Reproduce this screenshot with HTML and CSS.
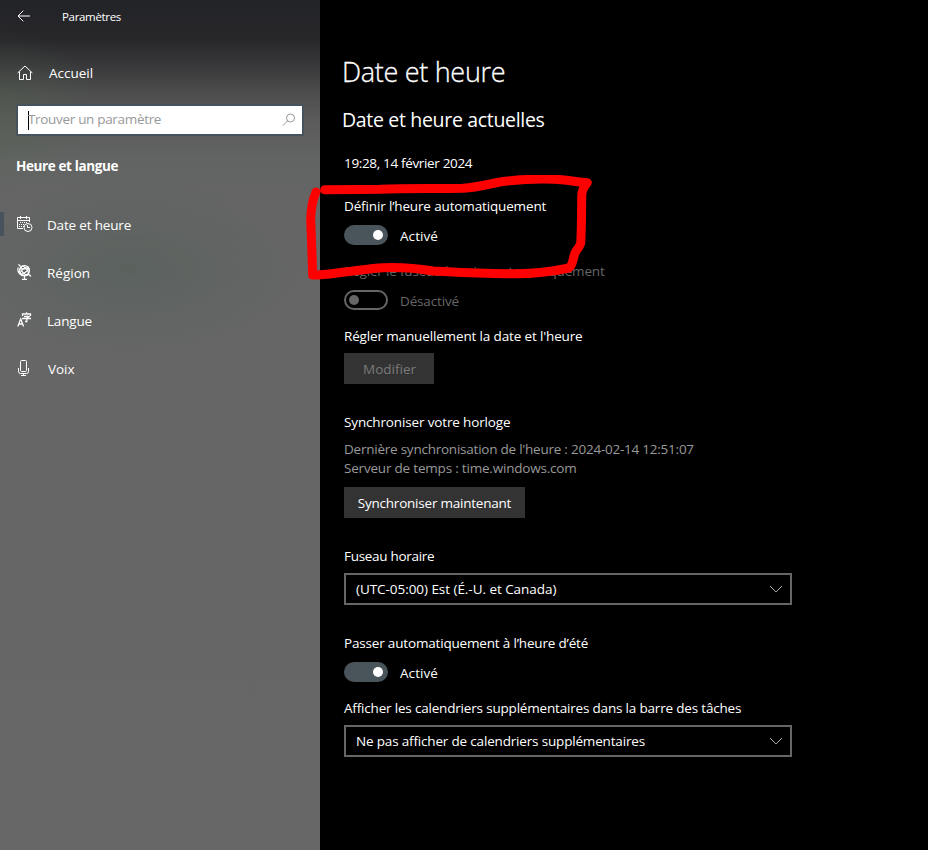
FILE: index.html
```html
<!DOCTYPE html>
<html lang="fr">
<head>
<meta charset="utf-8">
<title>Paramètres</title>
<link rel="stylesheet" href="styles.css">
</head>
<body>
<div class="window">
  <aside class="sidebar">
    <header class="titlebar">
      <svg class="back" width="14" height="12" viewBox="0 0 14 12"><path d="M1 6H13M6.3 .7L1 6l5.3 5.3"/></svg>
      <span class="app">Paramètres</span>
    </header>
    <div class="home">
      <svg class="icon" width="16" height="16" viewBox="0 0 16 16"><path d="M.6 8L8 1l7.400 7M2.500 6.500V14.500H6.500V9.500H9.500V14.500H13.500V6.500"/></svg>
      <span>Accueil</span>
    </div>
    <div class="search">
      <span class="caret"></span>
      <span class="placeholder">Trouver un paramètre</span>
      <svg class="lens" width="14" height="14" viewBox="0 0 14 14"><circle cx="8.500" cy="5" r="4"/><path d="M5.600 7.900L.8 12.700"/></svg>
    </div>
    <h3 class="group">Heure et langue</h3>
    <nav class="nav">
      <a class="item active">
        <svg class="icon calendar" width="16" height="16" viewBox="0 0 16 16"><path d="M6 12.500H.5V1.500H12.500V6M.5 4.500H12.500M3.500 0V3M9.500 0V3"/><path class="dots" d="M3 6.500H11M2 8.500H8M2 10.500H7"/><circle cx="11" cy="11.500" r="4"/><path d="M10.500 9V11.500H13"/></svg>
        <span>Date et heure</span></a>
      <a class="item">
        <svg class="icon globe" width="16" height="16" viewBox="0 0 16 16"><circle cx="7.500" cy="6.500" r="5"/><ellipse cx="7.500" cy="6.500" rx="2.500" ry="5" transform="rotate(-40 7.500 6.500)"/><ellipse cx="7.500" cy="6.500" rx="5" ry="2" transform="rotate(-40 7.500 6.500)"/><path d="M1.500 .3L3.500 2.500M1.200 3.500C-.5 10 6 14 12 10.500L14 12.500M7.500 12.500V15M5 15.300H10M3.500 4C6 5 10 5 11.800 4"/></svg>
        <span class="region">Région</span></a>
      <a class="item">
        <svg class="icon lang" width="16" height="16" viewBox="0 0 16 16"><path d="M.8 14.500L3.700 7L6.600 14.500M1.700 12H5.700M5.500 4V2H13.500V4M9.500 .3V2M7 4.500H12L9.800 6.200V9.500H8M5 6.500H14"/></svg>
        <span>Langue</span></a>
      <a class="item">
        <svg class="icon" width="16" height="16" viewBox="0 0 16 16"><path d="M3.500 1.500Q3.500 .5 4.500 .5H8.500Q9.500 .5 9.500 1.500V10.500Q9.500 11.500 8.500 11.500H4.500Q3.500 11.500 3.500 10.500ZM1.500 8V11.500Q1.500 13.500 3.500 13.500H9.500Q11.500 13.500 11.500 11.500V8M6.500 13.500V15.500M4 15.500H9"/></svg>
        <span class="voix">Voix</span></a>
    </nav>
  </aside>
  <main class="content">
    <h1 class="title">Date et heure</h1>
    <h2 class="subtitle">Date et heure actuelles</h2>
    <p class="line now">19:28, 14 février 2024</p>

    <p class="line wide">Définir l’heure automatiquement</p>
    <div class="switch-row"><span class="switch on"></span><span class="state">Activé</span></div>
    <p class="line dim">Régler le fuseau horaire automatiquement</p>
    <div class="switch-row dim"><span class="switch"></span><span class="state off">Désactivé</span></div>

    <p class="line wide">Régler manuellement la date et l'heure</p>
    <button class="button modify" disabled><span>Modifier</span></button>

    <p class="line wide">Synchroniser votre horloge</p>
    <div class="details">
      <p class="last-sync">Dernière synchronisation de l'heure : 2024-02-14 12:51:07</p>
      <p class="server">Serveur de temps : time.windows.com</p>
    </div>
    <button class="button sync"><span>Synchroniser maintenant</span></button>

    <p class="line tight">Fuseau horaire</p>
    <div class="select zone"><span>(UTC-05:00) Est (É.-U. et Canada)</span><svg class="chevron" width="14" height="8" viewBox="0 0 14 8"><path d="M1 1l6 6 6-6"/></svg></div>

    <p class="line">Passer automatiquement à l’heure d’été</p>
    <div class="switch-row"><span class="switch on"></span><span class="state">Activé</span></div>
    <p class="line calendars">Afficher les calendriers supplémentaires dans la barre des tâches</p>
    <div class="select"><span>Ne pas afficher de calendriers supplémentaires</span><svg class="chevron" width="14" height="8" viewBox="0 0 14 8"><path d="M1 1l6 6 6-6"/></svg></div>
  </main>
  <svg class="marker" width="300" height="110" viewBox="300 175 300 110"><path d="M324.700 189.700C350 189.500 360 189.500 380 189.300C410 188 435 189 463 188.300C480 187 488 184 500 182C530 178 555 179 566.700 180.300Q578 182 587.300 182.700C582 189 581.500 193 581.700 199C581.500 215 581.500 232 580.700 243.300C579 249 577 248 575 253C573 258 573 265 569 268C555 271 535 274 513 273.700C480 274 460 272.500 433 271C415 268 400 267 383 267.700C368 268.500 360 270.500 346.700 271.700C335 273 325 275 312.700 275C312 255 311.500 240 310.700 220Q311 203 316 192"/></svg>
</div>
</body>
</html>
```
FILE: styles.css
```css
* { box-sizing: border-box; }
body { margin: 0; background: #000; color: #fff; font: 13.5px/20px "Open Sans", "Noto Sans", sans-serif; letter-spacing: -.175px; }
h1, h2, h3, p { margin: 0; font-weight: 400; }
.window { position: relative; display: flex; width: 928px; height: 850px; overflow: hidden; }
svg { fill: none; stroke: currentColor; flex: none; }
span, p, h1, h2, h3 { white-space: nowrap; }

.sidebar {
  width: 320px; height: 850px; flex: none;
  background:
    radial-gradient(ellipse 100px 80px at 0 110px, rgba(82, 98, 78, .38), transparent),
    radial-gradient(ellipse 180px 90px at 130px 270px, rgba(84, 96, 90, .6), transparent),
    linear-gradient(#222327 0, #28282b 40px, #38383a 65px, #4b4b4c 90px, #5a5b5a 120px, #626463 160px, #656565 210px, #666 300px, #676767 100%);
}
.titlebar { display: flex; align-items: center; height: 32px; padding-left: 17px; }
.app { margin: 2px 0 0 31px; font-size: 11.5px; letter-spacing: -.325px; }
.home { display: flex; align-items: center; height: 20px; margin-top: 31px; padding-left: 17px; }
.home span { margin-left: 16px; letter-spacing: 0; }
.search { display: flex; align-items: center; width: 288px; height: 32px; margin: 21px 0 0 16px; padding: 0 6px 0 10px; border: 2px solid #46535c; background: #fff; color: #999; }
.caret { width: 1px; height: 19px; margin-right: -1px; background: #000; }
.placeholder { flex: 1; margin-top: -2px; letter-spacing: -.32px; }
.group { margin: 20px 0 0 16px; font-size: 13.5px; font-weight: 700; letter-spacing: -.38px; }
.nav { margin-top: 25px; }
.item { display: flex; align-items: center; height: 48px; padding-left: 17px; position: relative; }
.item .icon { margin-top: -2px; }
.item span { margin-left: 14px; }
.item .region { letter-spacing: 0; }
.item .voix { margin-left: 15px; letter-spacing: -.04px; }
.active::before { content: ""; position: absolute; left: 0; top: 11px; width: 4px; height: 24px; background: #46535c; }
.dots { stroke-dasharray: 1 1; }
.lang { stroke-width: 1.300px; }
.globe { stroke-width: 1.200px; }

.content { padding: 52px 0 0 24px; }
.title { margin-left: -2px; font-size: 27px; line-height: 40px; font-weight: 300; letter-spacing: -.3px; -webkit-text-stroke: .3px #fff; }
.subtitle { margin: 13px 0 18px -2px; font-size: 19.500px; line-height: 30px; letter-spacing: -.32px; }
.now { margin-bottom: 23px; letter-spacing: -.34px; }
.wide { letter-spacing: -.145px; }
.tight { letter-spacing: -.3px; }
.calendars { letter-spacing: -.185px; }
.switch-row { display: flex; height: 20px; margin: 9px 0 16px; }
.state { margin: 1px 0 0 12px; letter-spacing: .076px; }
.off { letter-spacing: -.148px; }
.switch { display: flex; align-items: center; width: 44px; height: 20px; padding: 0 3px; border: 2px solid currentColor; border-radius: 10px; }
.switch::before { content: ""; width: 10px; height: 10px; border-radius: 50%; background: currentColor; }
.switch.on { justify-content: flex-end; border-color: #4a545b; background: #4a545b; }
.dim { color: #666; }
.button { display: flex; align-items: center; justify-content: center; height: 31px; padding: 0; border: 0; background: #333; color: #fff; font: inherit; }
.modify { width: 90px; margin: 7px 0 28px; padding-left: 1px; color: #7a7a7a; letter-spacing: 0; }
.sync { width: 181px; margin: 9px 0 28px; letter-spacing: -.22px; }
.details { margin-top: 8px; color: #999; line-height: 19px; }
.last-sync { letter-spacing: -.235px; }
.server { letter-spacing: -.2px; }
.select { display: flex; align-items: center; justify-content: space-between; width: 448px; height: 32px; margin-top: 7px; padding: 0 7px 0 10px; border: 2px solid #666; }
.zone { margin-bottom: 28px; }
.zone span { letter-spacing: -.05px; }
.chevron { stroke: #aaa; }
.marker { position: absolute; left: 300px; top: 175px; stroke: #f00; stroke-width: 9px; stroke-linecap: round; stroke-linejoin: round; }
```
